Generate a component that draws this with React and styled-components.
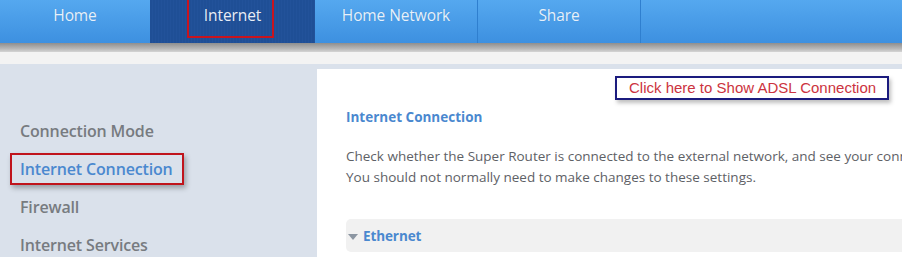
import React from "react";
import styled, { createGlobalStyle } from "styled-components";

const Global = createGlobalStyle`
  html, body { margin: 0; padding: 0; background: #dae1eb; }
  body { font-family: "Open Sans", "Noto Sans", sans-serif; overflow: hidden; }
  * { box-sizing: border-box; }
`;

const Page = styled.div`
  width: 902px;
  height: 257px;
  display: flex;
  flex-direction: column;
  background: #dae1eb;
  overflow: hidden;
`;

const NavBar = styled.nav`
  height: 43px;
  display: flex;
  background: linear-gradient(#55a8ef, #3d90e0);
  flex-shrink: 0;
`;

const NavItem = styled.div`
  position: relative;
  flex-shrink: 0;
  width: ${(p) => p.$w}px;
  display: flex;
  justify-content: center;
  padding-top: 4px;
  font-size: 15.5px;
  letter-spacing: -0.1px;
  color: ${(p) => (p.$active ? "#e8eef8" : "#e6f1fc")};
  background: ${(p) =>
    p.$active
      ? "repeating-linear-gradient(90deg, #1f4f96 0 2px, #22529a 2px 3px)"
      : "transparent"};
  border-left: ${(p) => (p.$divider ? "1px solid #2f7fcf" : "none")};
  text-shadow: 0 0 1px rgba(0,0,0,0.15);
`;

const RedMark = styled.div`
  position: absolute;
  left: ${(p) => p.$l}px;
  top: -2px;
  width: 87px;
  height: 40px;
  border: 2px solid #c8141e;
`;

const Shade = styled.div`
  height: 9px;
  background: linear-gradient(#8e8e8e, #b5b5b5 60%, #d4d4d4);
  flex-shrink: 0;
`;

const Band = styled.div`
  height: 12px;
  background: #f3f3f3;
  flex-shrink: 0;
`;

const Body = styled.div`
  flex: 1;
  display: flex;
  min-height: 0;
`;

const Sidebar = styled.aside`
  width: 317px;
  flex-shrink: 0;
  padding: 57px 0 0 20px;
  display: flex;
  flex-direction: column;
  gap: 17px;
`;

const SideItem = styled.div`
  position: relative;
  font-size: 16px;
  line-height: 21px;
  color: ${(p) => (p.$active ? "#4a88cf" : "#777b80")};
  font-weight: 600;
  letter-spacing: -0.15px;
`;

const SideMark = styled.div`
  position: absolute;
  left: -10px;
  top: -6px;
  width: 174px;
  height: 32px;
  border: 2px solid #c0141c;
  box-shadow: 2px 3px 5px rgba(0, 0, 0, 0.3);
`;

const Content = styled.main`
  flex: 1;
  min-width: 0;
  overflow: hidden;
  margin-top: 5px;
  background: #fff;
  padding: 39px 0 0 29px;
  position: relative;
`;

const AdslLink = styled.div`
  position: absolute;
  left: 298px;
  top: 7px;
  width: 274px;
  height: 24px;
  border: 2px solid #1b1b7e;
  box-shadow: 2px 3px 4px rgba(0, 0, 0, 0.25);
  font-family: "Liberation Sans", Arial, sans-serif;
  font-size: 15px;
  color: #cc3340;
  padding: 1px 0 0 12px;
  white-space: nowrap;
`;

const Heading = styled.h2`
  margin: 0;
  font-size: 13.5px;
  font-weight: 700;
  color: #4a88cf;
  line-height: 19px;
  letter-spacing: 0;
`;

const Para = styled.p`
  margin: 19px 0 0;
  font-size: 13.5px;
  line-height: 21px;
  color: #5e6166;
  white-space: nowrap;
`;

const Accordion = styled.div`
  margin-top: 31px;
  height: 33px;
  background: #f1f1f1;
  border-radius: 5px 0 0 5px;
  display: flex;
  align-items: center;
  gap: 5px;
  padding-left: 2px;
  font-size: 13.5px;
  font-weight: 700;
  color: #4a88cf;
  letter-spacing: -0.1px;
`;

const Caret = styled.span`
  width: 0;
  height: 0;
  border-left: 5px solid transparent;
  border-right: 5px solid transparent;
  border-top: 6px solid #8c96a2;
  margin-top: 3px;
`;

export default function App() {
  return (
    <Page>
      <Global />
      <NavBar>
        <NavItem $w={150}>Home</NavItem>
        <NavItem $w={165} $active>
          Internet
          <RedMark $l={37} />
        </NavItem>
        <NavItem $w={162}>Home Network</NavItem>
        <NavItem $w={163} $divider>Share</NavItem>
        <NavItem $w={262} $divider />
      </NavBar>
      <Shade />
      <Band />
      <Body>
        <Sidebar>
          <SideItem>Connection Mode</SideItem>
          <SideItem $active>
            Internet Connection
            <SideMark />
          </SideItem>
          <SideItem>Firewall</SideItem>
          <SideItem>Internet Services</SideItem>
        </Sidebar>
        <Content>
          <AdslLink>Click here to Show ADSL Connection</AdslLink>
          <Heading>Internet Connection</Heading>
          <Para>
            Check whether the Super Router is connected to the external network, and see your connection details.
            <br />
            You should not normally need to make changes to these settings.
          </Para>
          <Accordion>
            <Caret />
            Ethernet
          </Accordion>
        </Content>
      </Body>
    </Page>
  );
}
